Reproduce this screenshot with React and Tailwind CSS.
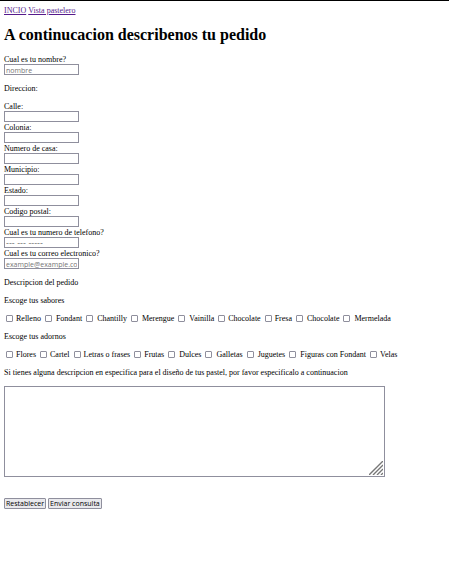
import React from 'react';

const fields = [
  { id: 'calle', label: 'Calle:' },
  { id: 'colonia', label: 'Colonia:' },
  { id: 'numero', label: 'Numero de casa:' },
  { id: 'municipio', label: 'Municipio:' },
  { id: 'estado', label: 'Estado:' },
  { id: 'postal', label: 'Codigo postal:' },
  {
    id: 'telefono',
    label: 'Cual es tu numero de telefono?',
    type: 'tel',
    placeholder: '--- --- -----',
    font: "font-['DejaVu_Sans',sans-serif] text-[8px]",
  },
  { id: 'correo', label: 'Cual es tu correo electronico?', type: 'email', placeholder: 'example@example.com' },
];

const sabores = [
  { text: 'Relleno' },
  { text: 'Fondant', wide: true },
  { text: 'Chantilly', wide: true },
  { text: 'Merengue', wide: true },
  { text: 'Vainilla', wide: true },
  { text: 'Chocolate' },
  { text: 'Fresa' },
  { text: 'Chocolate', wide: true },
  { text: 'Mermelada', wide: true },
];

const adornos = [
  { text: 'Flores' },
  { text: 'Cartel' },
  { text: 'Letras o frases' },
  { text: 'Frutas' },
  { text: 'Dulces', wide: true },
  { text: 'Galletas', wide: true },
  { text: 'Juguetes', wide: true },
  { text: 'Figuras con Fondant', wide: true },
  { text: 'Velas' },
];

function Field({ id, label, type = 'text', placeholder, font = "font-['Open_Sans',sans-serif] text-[7px]" }) {
  return (
    <div className="flex flex-col items-start">
      <label htmlFor={id} className="h-[10px]">{label}</label>
      <input
        id={id}
        type={type}
        placeholder={placeholder}
        className={`block h-[11px] w-[75px] border border-[#8f8f9d] bg-white px-px pt-px leading-[9px] text-black placeholder:text-[#757575] ${font}`}
      />
    </div>
  );
}

function Choices({ name, items }) {
  return (
    <div className="flex flex-wrap gap-x-1 pl-[2px]">
      {items.map(({ text, wide }, i) => (
        <label key={i} className={`flex h-[10px] items-center ${wide ? 'gap-1' : 'gap-[3px]'}`}>
          <input
            type="checkbox"
            name={name}
            className="size-[7px] shrink-0 appearance-none rounded-[1px] border border-[#8f8f9d] bg-white checked:bg-blue-600"
          />
          <span className="h-[10px]">{text}</span>
        </label>
      ))}
    </div>
  );
}

const buttonClass =
  "h-[11px] rounded-[1px] border border-[#8f8f9d] bg-[#e9e9ed] px-px font-['Open_Sans',sans-serif] text-[7px] leading-[9px] text-black";

export default function App() {
  return (
    <main className="min-h-screen border-t border-black bg-white px-1 pt-1 font-['Liberation_Serif',serif] text-[8px] leading-3 text-black">
      <nav className="flex gap-[2px] text-[#551a8b]">
        <a href="#inicio" className="underline">INCIO</a>
        <a href="#pastelero" className="underline">Vista pastelero</a>
      </nav>
      <h1 className="mt-2 text-[16px] leading-5 font-bold">A continucacion describenos tu pedido</h1>
      <form className="mt-[9px] flex flex-col gap-2">
        <Field id="nombre" label="Cual es tu nombre?" placeholder="nombre" />
        <p className="h-[10px]">Direccion:</p>
        <div>
          {fields.map((field) => (
            <Field key={field.id} {...field} />
          ))}
        </div>
        <p className="h-[10px]">Descripcion del pedido</p>
        <p className="h-[10px]">Escoge tus sabores</p>
        <Choices name="sabores" items={sabores} />
        <p className="h-[10px]">Escoge tus adornos</p>
        <Choices name="adornos" items={adornos} />
        <label htmlFor="detalle" className="h-[10px]">
          Si tienes alguna descripcion en especifica para el diseño de tus pastel, por favor especificalo a continuacion
        </label>
        <div className="relative mt-px w-[381px] max-w-full">
          <textarea id="detalle" className="block h-[91px] w-full resize-none border border-[#8f8f9d] bg-white p-px" />
          <svg className="pointer-events-none absolute right-[2px] bottom-[2px]" width="14" height="14" viewBox="0 0 14 14" stroke="#777" strokeWidth="1.4" aria-hidden="true">
            <path d="M0 14 14 0M4 14 14 4M8 14 14 8M12 14 14 12" />
          </svg>
        </div>
        <div className="mt-[13px] flex gap-[2px]">
          <button type="reset" className={buttonClass}>Restablecer</button>
          <button type="submit" className={buttonClass}>Enviar consulta</button>
        </div>
      </form>
    </main>
  );
}
